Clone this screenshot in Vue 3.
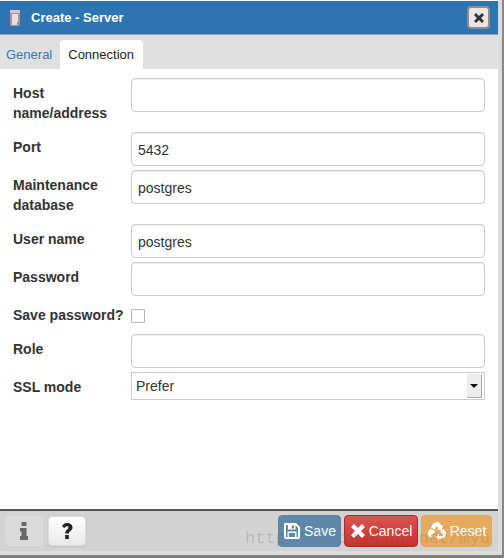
<template>
  <div class="frame">
    <div class="dialog">
      <header class="title-bar">
        <svg class="server-icon" width="12" height="18" viewBox="0 0 12 18">
          <rect x="1" y="1" width="10" height="16" rx="1" fill="#b98d94" />
          <rect x="1" y="1" width="10" height="3" fill="#d9c3c6" />
          <rect x="3" y="5" width="6" height="11" fill="#e6dfe0" />
          <rect x="8" y="13" width="3" height="3" fill="#5fae9c" />
        </svg>
        <span class="title">Create - Server</span>
        <button class="close-btn" type="button">
          <svg width="12" height="12" viewBox="0 0 12 12">
            <path d="M3 1 6 4 9 1 11 3 8 6 11 9 9 11 6 8 3 11 1 9 4 6 1 3Z" fill="#333" />
          </svg>
        </button>
      </header>

      <nav class="tabs">
        <a class="tab">General</a>
        <a class="tab active">Connection</a>
      </nav>

      <form class="form">
        <div v-for="field in fields" :key="field.label" class="row" :class="'row-' + field.type">
          <label class="label">{{ field.label }}</label>
          <span v-if="field.type === 'check'" class="checkbox"></span>
          <div v-else-if="field.type === 'select'" class="select">
            <span>{{ field.value }}</span>
            <span class="select-arrow"></span>
          </div>
          <div v-else class="input">{{ field.value }}</div>
        </div>
      </form>

      <footer class="footer">
        <div class="footer-left">
          <button class="help-btn muted" type="button">
            <svg width="10" height="18" viewBox="0 0 10 18">
              <path d="M2.5 0H7.5V4H2.500ZM1 6H7.500V14H9V18H1V14H2.500V9.500H1Z" fill="#666" />
            </svg>
          </button>
          <button class="help-btn" type="button">
            <svg width="12" height="18" viewBox="0 0 12 18">
              <path d="M1 4.500C2 2 3.800 1 6.200 1 9.200 1 11.500 2.800 11.500 5.500 11.500 9 7.800 9 7.800 11.500H4.200C4.200 7.800 7.500 7.500 7.500 5.600 7.500 4.700 6.800 4.200 6 4.200 5 4.200 4.300 4.800 3.500 6ZM4.200 13H7.800V17H4.200Z" fill="#222" />
            </svg>
          </button>
        </div>
        <div class="footer-right">
          <button class="action save" type="button">
            <svg width="18" height="18" viewBox="0 0 18 18">
              <path fill-rule="evenodd" d="M2 1H13L17 5V15.500C17 16.300 16.300 17 15.500 17H2.500C1.700 17 1 16.300 1 15.500V2C1 1.400 1.400 1 2 1ZM3 3V15H4.500V9.500H13.500V15H15V5.800L12.500 3.300V7.500H5V3ZM6 11V15H12V11ZM8.800 3.500V6.500H11V3.500Z" fill="#fff" />
            </svg>
            Save
          </button>
          <button class="action cancel" type="button">
            <svg width="16" height="16" viewBox="0 0 16 16">
              <path d="M4 1 8 5 12 1 15 4 11 8 15 12 12 15 8 11 4 15 1 12 5 8 1 4Z" fill="#fff" />
            </svg>
            Cancel
          </button>
          <button class="action reset" type="button">
            <svg width="20" height="20" viewBox="0 0 20 20">
              <path d="M6 2.500 10 1 12.500 1.500 14.500 5 16.500 4 14.500 9 9.500 8.500 11.500 7.500 10 5 7.500 8.500 4 6.500ZM1 11 3 7.500 7 9.500 8.500 9 5.500 14.500 3.800 13.500 5.500 16.500 3 16.500C1.500 15 .5 13 1 11ZM19 11.500 16.500 8 13 10 16 15 12 15V13L8.500 16 12 19V17.500H16C18 16 19.500 14 19 11.500Z" fill="#fff" />
            </svg>
            Reset
          </button>
        </div>
      </footer>
    </div>
    <span class="watermark">http://blog.csdn.net/myu</span>
  </div>
</template>

<script setup>
const fields = [
  { label: 'Host name/address', value: '', type: 'tall' },
  { label: 'Port', value: '5432', type: 'text' },
  { label: 'Maintenance database', value: 'postgres', type: 'tall' },
  { label: 'User name', value: 'postgres', type: 'text' },
  { label: 'Password', value: '', type: 'text' },
  { label: 'Save password?', value: '', type: 'check' },
  { label: 'Role', value: '', type: 'text' },
  { label: 'SSL mode', value: 'Prefer', type: 'select' },
];
</script>

<style>
html,
body {
  margin: 0;
  background: #fff;
}
</style>

<style scoped>
.frame {
  position: relative;
  width: 504px;
  height: 558px;
  overflow: hidden;
  box-sizing: border-box;
  background: #dcdcdc;
  border-right: 2px solid #888;
  border-bottom: 3px solid #808080;
  padding-right: 4px;
  padding-bottom: 4px;
  font-family: 'Liberation Sans', Arial, sans-serif;
  color: #333;
}

.dialog {
  height: 100%;
  display: flex;
  flex-direction: column;
  background: #fff;
}

.title-bar {
  height: 33px;
  flex: none;
  display: flex;
  align-items: center;
  margin-top: 1px;
  padding: 0 8px 0 9px;
  background: #2c75b2;
  border-bottom: 1px solid #999;
  color: #fff;
}

.server-icon {
  margin-right: 10px;
}

.title {
  font-size: 13px;
  font-weight: 700;
}

.close-btn {
  margin-left: auto;
  width: 23px;
  height: 23px;
  padding: 0;
  display: flex;
  align-items: center;
  justify-content: center;
  background: #e6e6e6;
  border: 2px solid #8d8d8d;
  border-radius: 4px;
}

.tabs {
  height: 34px;
  flex: none;
  display: flex;
  align-items: flex-end;
  background: #e0e0e0;
  font-size: 13px;
}

.tab {
  height: 29px;
  box-sizing: border-box;
  padding: 7px 6px 0;
  color: #337ab7;
}

.tab:first-child {
  margin-right: 2px;
}

.tab.active {
  width: 83px;
  padding: 7px 0 0 8px;
  background: #fff;
  color: #222;
  border-radius: 4px 4px 0 0;
}

.form {
  flex: 1;
  padding: 9px 13px 0;
}

.row {
  display: grid;
  grid-template-columns: 118px 354px;
  margin-bottom: 4px;
}

.row-tall {
  height: 50px;
}

.row-check {
  height: 30px;
  align-items: center;
}

.label {
  padding-top: 5px;
  font-size: 14px;
  font-weight: 700;
  line-height: 20px;
}

.row-check .label {
  padding: 0;
  white-space: nowrap;
}

.input {
  height: 34px;
  box-sizing: border-box;
  padding: 0 6px;
  font-size: 14px;
  line-height: 34px;
  background: #fff;
  border: 1px solid #ccc;
  border-radius: 4px;
  box-shadow: inset 0 1px 1px rgba(0, 0, 0, 0.075);
}

.checkbox {
  width: 14px;
  height: 14px;
  margin-top: 2px;
  box-sizing: border-box;
  background: #fff;
  border: 1px solid #b5b5b5;
  border-radius: 1px;
}

.select {
  height: 28px;
  box-sizing: border-box;
  display: flex;
  align-items: center;
  justify-content: space-between;
  padding: 0 2px 0 4px;
  font-size: 14px;
  background: #fff;
  border: 1px solid #ccc;
}

.select-arrow {
  position: relative;
  width: 15px;
  height: 24px;
  box-sizing: border-box;
  background: #ededed;
  border: 1px solid #a9a9a9;
  border-top-color: #e8e8e8;
  border-left-color: #e8e8e8;
}

.select-arrow::after {
  content: '';
  position: absolute;
  left: 2px;
  top: 9px;
  border: 4px solid transparent;
  border-top: 4px solid #111;
  border-bottom: 0;
}

.footer {
  height: 36px;
  flex: none;
  display: flex;
  align-items: flex-start;
  justify-content: space-between;
  padding: 4px 0 0 5px;
  background: #d3d3d3;
  border-top: 2px solid #555;
}

.footer-left,
.footer-right {
  display: flex;
}

.footer-left {
  gap: 5px;
  padding-top: 1px;
}

.footer-right {
  gap: 3px;
  padding-right: 6px;
}

.help-btn {
  width: 38px;
  height: 30px;
  padding: 0;
  display: flex;
  align-items: center;
  justify-content: center;
  background: linear-gradient(#fff, #e8e8e8);
  border: 1px solid #dcdcdc;
  border-radius: 4px;
  box-shadow: 0 1px 2px rgba(0, 0, 0, 0.1);
}

.help-btn.muted {
  background: #dadada;
  box-shadow: none;
}

.action {
  height: 32px;
  padding: 0;
  display: flex;
  align-items: center;
  justify-content: center;
  gap: 3px;
  font-family: inherit;
  font-size: 14px;
  color: #fff;
  border-radius: 4px;
}

.save {
  width: 63px;
  background: #5d88ac;
  border: 1px solid #5a84a8;
}

.cancel {
  width: 74px;
  background: linear-gradient(#da5450, #c9302c);
  border: 1px solid #ac2925;
}

.reset {
  width: 71px;
  background: #e5aa5c;
  border: 1px solid #e0a858;
}

.watermark {
  position: absolute;
  left: 245px;
  top: 529px;
  font-family: 'Liberation Mono', monospace;
  font-size: 17px;
  color: rgba(120, 120, 120, 0.28);
  white-space: nowrap;
  pointer-events: none;
}
</style>
